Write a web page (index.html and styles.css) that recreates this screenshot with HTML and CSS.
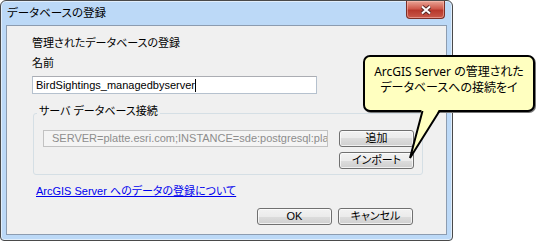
FILE: index.html
```html
<!DOCTYPE html>
<html lang="ja">

<head>
    <meta charset="UTF-8">
    <meta name="viewport" content="width=device-width, initial-scale=1">
    <title>データベースの登録</title>
    <link rel="stylesheet" href="styles.css">
</head>

<body>
    <div class="window">
        <div class="titlebar">
            <span class="title">データベースの登録</span>
            <button class="close" aria-label="閉じる">
                <svg width="12" height="10" viewBox="0 0 12 10">
                    <path class="x-outline" d="M2 1.5L10 8.5M10 1.5L2 8.5" />
                    <path class="x-mark" d="M2 1.5L10 8.5M10 1.5L2 8.5" />
                </svg>
            </button>
        </div>
        <div class="client">
            <div class="heading">管理されたデータベースの登録</div>
            <div class="field-label">名前</div>
            <div class="textbox">BirdSightings_managedbyserver<span class="caret"></span></div>

            <div class="group">
                <div class="group-title">サーバ データベース接続</div>
                <div class="group-body">
                    <div class="conn">SERVER=platte.esri.com;INSTANCE=sde:postgresql:platte</div>
                    <div class="side-buttons">
                        <button class="btn">追加</button>
                        <button class="btn">インポート</button>
                    </div>
                </div>
            </div>

            <a class="help-link" href="#">ArcGIS Server へのデータの登録について</a>

            <div class="actions">
                <button class="btn">OK</button>
                <button class="btn">キャンセル</button>
            </div>
        </div>
    </div>

    <!-- callout over the dialog -->
    <div class="callout">
        ArcGIS Server の管理された<br>データベースへの接続をイ
    </div>
    <svg class="callout-tail" width="45" height="55" viewBox="0 0 45 55">
        <polygon class="tail-fill" points="22,0 10,50 40,0" />
        <path class="tail-line" d="M22.5 3L10 50L39.5 3" />
    </svg>
</body>

</html>
```

FILE: styles.css
```css
/* Page */
body {
    margin: 0;
    background: #fff;
    position: relative;
    font-family: "Liberation Sans", "Noto Sans CJK JP", sans-serif;
    font-size: 11px;
    font-feature-settings: "palt";
    color: #000;
}

/* Window frame */
.window {
    box-sizing: border-box;
    width: 453px;
    height: 241px;
    border: 1px solid #4a4a4a;
    border-radius: 6px 6px 4px 4px;
    padding: 0 5px 5px;
    background: #bcd9f7;
    box-shadow: inset 0 0 0 1px rgba(255, 255, 255, .55);
}

.titlebar {
    display: flex;
    justify-content: space-between;
    align-items: flex-start;
    height: 24px;
}

.title {
    padding-left: 1px;
    line-height: 24px;
    font-size: 11.5px;
}

.close {
    box-sizing: border-box;
    width: 39px;
    height: 18px;
    margin-right: 2px;
    padding: 0;
    display: flex;
    align-items: center;
    justify-content: center;
    border: 1px solid #7b2f27;
    border-top: none;
    border-radius: 0 0 4px 4px;
    background: linear-gradient(#e9a596, #cf5a4c 45%, #b7382c 55%, #c9594a);
    box-shadow: inset 0 0 0 1px rgba(255, 200, 190, .5);
}

.x-outline {
    fill: none;
    stroke: #5a2a26;
    stroke-width: 4;
}

.x-mark {
    fill: none;
    stroke: #fff;
    stroke-width: 2;
}

/* Client area */
.client {
    box-sizing: border-box;
    height: 210px;
    border: 1px solid #8c9cb0;
    background: #f0f0f0;
    padding: 9px 0 0 25px;
    line-height: 16px;
}

.field-label {
    margin-top: 4px;
}

.textbox {
    box-sizing: border-box;
    width: 285px;
    height: 18px;
    margin-top: 5px;
    padding-left: 3px;
    border: 1px solid #b5c1ce;
    border-top-color: #abadb3;
    background: #fff;
    line-height: 16px;
    display: flex;
    align-items: center;
}

.caret {
    display: inline-block;
    width: 1px;
    height: 13px;
    background: #000;
}

/* Group box */
.group {
    box-sizing: border-box;
    width: 390px;
    margin: 19px 0 0 1px;
    border: 1px solid #d5dfe5;
    border-radius: 3px;
    padding: 0 8px 5px 9px;
}

.group-title {
    width: max-content;
    margin: -11px 0 0 -6px;
    padding: 0 2px;
    background: #f0f0f0;
}

.group-body {
    display: flex;
    gap: 11px;
    margin-top: 11px;
}

.conn {
    box-sizing: border-box;
    width: 285px;
    height: 17px;
    padding-left: 8px;
    border: 1px solid #c2c2c2;
    background: #f4f4f4;
    color: #8d8d8d;
    line-height: 15px;
    white-space: nowrap;
    overflow: hidden;
}

.side-buttons {
    display: flex;
    flex-direction: column;
    gap: 5px;
}

/* Buttons */
.btn {
    box-sizing: border-box;
    width: 75px;
    height: 17px;
    padding: 0;
    font: inherit;
    line-height: 15px;
    color: #000;
    border: 1px solid #707070;
    border-radius: 3px;
    background: linear-gradient(#f2f2f2, #ebebeb 50%, #dddddd 50%, #cfcfcf);
    box-shadow: inset 0 0 0 1px rgba(255, 255, 255, .7);
}

.help-link {
    display: inline-block;
    margin: 8px 0 0 4px;
    color: #0000ee;
    text-decoration: underline;
}

.actions {
    display: flex;
    justify-content: flex-end;
    gap: 6px;
    width: 381px;
    margin-top: 9px;
}

/* Callout */
.callout {
    position: absolute;
    left: 363px;
    top: 55px;
    box-sizing: border-box;
    width: 172px;
    height: 57px;
    padding-top: 7px;
    border: 2px solid #000;
    border-radius: 7px;
    background: #ffffc0;
    box-shadow: 1px 1px 0 #777;
    font-family: "Noto Sans", "Noto Sans CJK JP", sans-serif;
    font-size: 12px;
    text-align: center;
    line-height: 16px;
}

.callout-tail {
    position: absolute;
    left: 400px;
    top: 108px;
    overflow: visible;
}

.tail-fill {
    fill: #ffffc0;
}

.tail-line {
    fill: none;
    stroke: #000;
    stroke-width: 2;
}
```
